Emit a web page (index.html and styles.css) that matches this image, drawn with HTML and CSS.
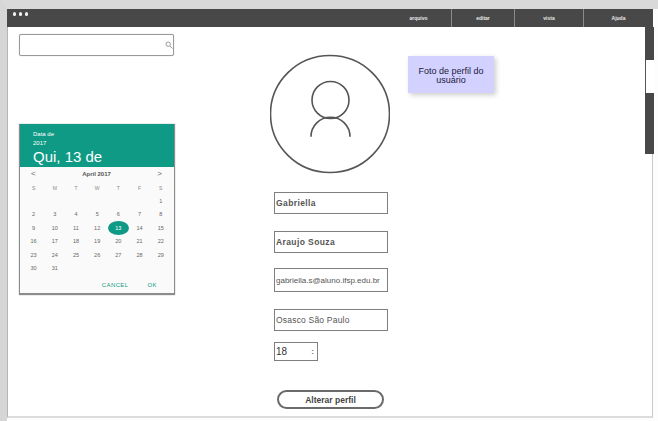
FILE: index.html
```html
<!DOCTYPE html>
<html lang="en">
<head>
    <meta charset="UTF-8">
    <title>Perfil</title>
    <link rel="stylesheet" href="styles.css">
</head>
<body>

    <div class="window">
        <div class="titlebar">
            <div class="dots"><span></span><span></span><span></span></div>
            <div class="menu">
                <div class="menu-item">arquivo</div>
                <div class="menu-item">editar</div>
                <div class="menu-item">vista</div>
                <div class="menu-item">Ajuda</div>
            </div>
        </div>

        <div class="scrollbar">
            <div class="scroll-top"></div>
            <div class="scroll-gap"></div>
            <div class="scroll-bottom"></div>
        </div>

        <div class="note">Foto de perfil do usuário</div>

        <div class="content">
            <div class="sidebar">
                <div class="search">
                    <svg width="8" height="8" viewBox="0 0 8 8" fill="none" stroke="#9a9a9a" stroke-width="1">
                        <circle cx="3.2" cy="3.2" r="2.2"/>
                        <path d="M5 5l2.5 2.5"/>
                    </svg>
                </div>

                <div class="calendar">
                    <div class="cal-head">
                        <div class="cal-label">Data de<br>2017</div>
                        <div class="cal-date">Qui, 13 de</div>
                    </div>
                    <div class="cal-body">
                        <div class="cal-month"><span>&lt;</span><b>April 2017</b><span>&gt;</span></div>
                        <div class="cal-grid cal-week">
                            <span>S</span><span>M</span><span>T</span><span>W</span><span>T</span><span>F</span><span>S</span>
                        </div>
                        <div class="cal-grid">
                            <span></span><span></span><span></span><span></span><span></span><span></span><span>1</span>
                            <span>2</span><span>3</span><span>4</span><span>5</span><span>6</span><span>7</span><span>8</span>
                            <span>9</span><span>10</span><span>11</span><span>12</span><span class="selected">13</span><span>14</span><span>15</span>
                            <span>16</span><span>17</span><span>18</span><span>19</span><span>20</span><span>21</span><span>22</span>
                            <span>23</span><span>24</span><span>25</span><span>26</span><span>27</span><span>28</span><span>29</span>
                            <span>30</span><span>31</span>
                        </div>
                        <div class="cal-actions"><span>CANCEL</span><span>OK</span></div>
                    </div>
                </div>
            </div>

            <div class="profile">
                <svg class="avatar" width="120" height="120" viewBox="0 0 120 120" fill="none" stroke="#555" stroke-width="1.6">
                    <ellipse cx="60" cy="60" rx="59.500" ry="58.500"/>
                    <circle cx="60.500" cy="46" r="18.500"/>
                    <path d="M41 82.700a19.500 19.500 0 0 1 39 0"/>
                </svg>
                <input class="field field-first" type="text" value="Gabriella">
                <input class="field field-second" type="text" value="Araujo Souza">
                <input class="field field-email" type="text" value="gabriella.s@aluno.ifsp.edu.br">
                <input class="field field-city" type="text" value="Osasco São Paulo">
                <div class="stepper"><span>18</span><span class="stepper-arrows">:</span></div>
                <button class="save-btn">Alterar perfil</button>
            </div>
        </div>
    </div>

</body>
</html>
```

FILE: styles.css
```css
* {
    box-sizing: border-box;
}

html, body {
    height: 100%;
}

body {
    margin: 0;
    height: 421px;
    overflow: hidden;
    background-color: #fdfdfd;
    border-top: 9px solid #d9d9d9;
    border-left: 7px solid #d6d6d6;
    font-family: "Liberation Sans", Arial, sans-serif;
}

.window {
    position: relative;
    width: 646px;
    height: 409px;
    background-color: white;
    border-left: 1px solid #b5b5b5;
    border-right: 1px solid #c8c8c8;
    border-bottom: 2px solid #dcdcdc;
}

.titlebar {
    display: flex;
    justify-content: space-between;
    height: 18px;
    margin: 0 -1px;
    background-color: #484848;
}

.dots {
    display: flex;
    gap: 2.5px;
    padding: 3px 0 0 5.5px;
}

.dots span {
    width: 3.5px;
    height: 3.5px;
    border-radius: 50%;
    background-color: #f2f2f2;
}

.menu {
    display: flex;
}

.menu-item {
    line-height: 18px;
    border-left: 1px solid #8a8a8a;
    color: #e8e8e8;
    font-size: 5px;
    font-weight: bold;
    text-align: center;
}

.menu-item:first-child {
    border-left: none;
    width: 65px;
}

.menu-item:nth-child(2) {
    width: 63px;
}

.menu-item:nth-child(3) {
    width: 69px;
}

.menu-item:last-child {
    width: 70px;
}

.scrollbar {
    position: absolute;
    top: 18px;
    right: -2px;
    width: 9px;
    height: 127px;
    display: flex;
    flex-direction: column;
}

.scroll-top {
    height: 33px;
    background-color: #484848;
}

.scroll-gap {
    height: 33px;
    background-color: white;
    border-left: 1px solid #555;
}

.scroll-bottom {
    height: 61px;
    background-color: #484848;
}

.note {
    position: absolute;
    left: 400px;
    top: 47px;
    width: 86px;
    height: 37px;
    padding: 11px 4px 0;
    background-color: #d3d1ff;
    box-shadow: 2px 2px 5px rgba(0, 0, 0, 0.2);
    color: #1c1a3c;
    font-size: 9px;
    line-height: 8.500px;
    text-align: center;
}

.content {
    display: flex;
    padding: 7px 0 0 11px;
}

.sidebar {
    width: 155px;
}

.search {
    display: flex;
    justify-content: flex-end;
    align-items: center;
    height: 22px;
    background-color: white;
    border: 1px solid #999;
    border-radius: 2px;
    box-shadow: 0 0 1px #aaa;
}

.calendar {
    width: 154px;
    height: 169px;
    margin: 68px 0 0 1px;
    background-color: #fafafa;
    box-shadow: 0 1px 1px 1px #8c8c8c;
}

.cal-head {
    height: 43px;
    padding: 6px 0 0 13px;
    background-color: #0f9a85;
    color: white;
}

.cal-label {
    font-size: 6px;
    line-height: 9px;
}

.cal-date {
    font-size: 15px;
    line-height: 17px;
}

.cal-body {
    padding: 0 2px 0 3px;
    color: #666;
}

.cal-month {
    display: flex;
    justify-content: space-between;
    padding: 0 10px 0 8px;
    height: 14px;
    line-height: 14px;
    font-size: 6px;
}

.cal-month b {
    color: #555;
}

.cal-month span {
    font-size: 8px;
}

.cal-grid {
    display: grid;
    grid-template-columns: repeat(7, 21.2px);
    grid-auto-rows: 13.500px;
    align-items: center;
    justify-items: center;
    font-size: 5.500px;
}

.cal-week {
    color: #888;
    grid-auto-rows: 13px;
    font-size: 5px;
}

.selected {
    width: 21px;
    height: 14px;
    line-height: 14px;
    border-radius: 50%;
    background-color: #0f9a85;
    color: white;
    text-align: center;
}

.cal-actions {
    display: flex;
    justify-content: flex-end;
    gap: 19px;
    padding: 7px 15px 0 0;
    color: #0f9a85;
    font-size: 6px;
    letter-spacing: 0.4px;
}

.profile {
    display: flex;
    flex-direction: column;
    align-items: flex-start;
    margin-left: 96px;
}

.avatar {
    display: block;
    margin-top: 20px;
}

.field {
    display: block;
    width: 114px;
    height: 22px;
    margin: 0 0 17px 4px;
    padding: 0 1px;
    background-color: white;
    border: 1px solid #7f7f7f;
    border-radius: 0;
    color: #555;
    font-family: inherit;
    font-size: 8.500px;
    font-weight: bold;
    letter-spacing: 0.4px;
    outline: none;
}

.field-first {
    margin-top: 18px;
}

.field-second {
    margin-bottom: 15px;
}

.field-email {
    height: 24px;
    font-size: 8px;
    font-weight: normal;
    letter-spacing: 0;
}

.field-city {
    margin-bottom: 11px;
    font-weight: normal;
    letter-spacing: 0.2px;
}

.stepper {
    display: flex;
    justify-content: space-between;
    align-items: center;
    width: 44px;
    height: 19px;
    margin-left: 4px;
    padding: 0 3px 0 1px;
    border: 1px solid #7f7f7f;
    color: #333;
    font-size: 10px;
}

.stepper-arrows {
    font-weight: bold;
    font-size: 8px;
    color: #666;
}

.save-btn {
    width: 107px;
    height: 19px;
    margin: 29px 0 0 7px;
    padding: 0;
    background-color: white;
    border: 2px solid #6a6a6a;
    border-radius: 10px;
    color: #444;
    font-family: inherit;
    font-size: 8.500px;
    font-weight: bold;
}
```
